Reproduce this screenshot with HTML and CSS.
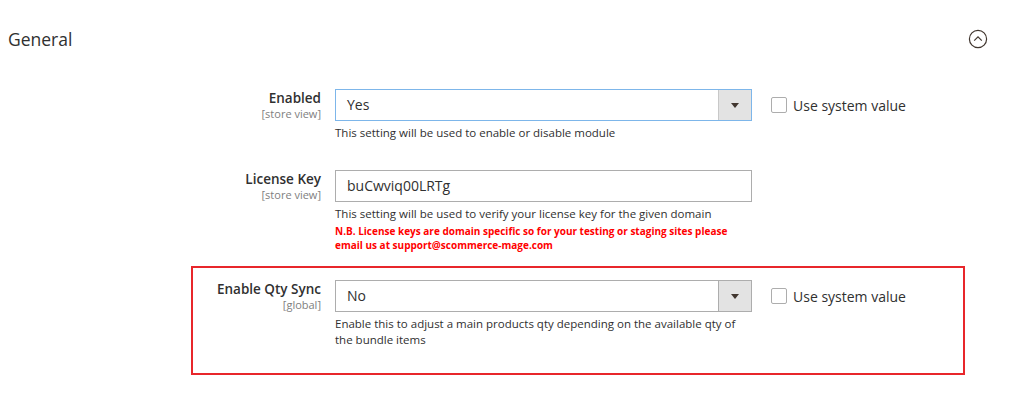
FILE: index.html
```html
<!DOCTYPE html>
<html lang="en">
<head>
  <meta charset="UTF-8" />
  <meta name="viewport" content="width=device-width, initial-scale=1.0"/>
  <title>General Configuration</title>
  <link rel="stylesheet" href="styles.css">
</head>
<body>
  <div class="section-head">
    <span class="section-title">General</span>
    <svg class="collapse-icon" width="20" height="20" viewBox="0 0 20 20">
      <circle cx="10" cy="10" r="8.6" fill="none" stroke="#41362f" stroke-width="1.2"/>
      <path d="M6.2 11.6 L10 7.8 L13.8 11.6" fill="none" stroke="#41362f" stroke-width="1.2"/>
    </svg>
  </div>

  <div class="form">
    <div class="row">
      <div class="label">
        <div class="label-text">Enabled</div>
        <div class="scope">[store view]</div>
      </div>
      <div class="value">
        <div class="select-box focused">
          <span class="select-value">Yes</span>
          <span class="select-btn"><span class="arrow"></span></span>
        </div>
        <div class="note">This setting will be used to enable or disable module</div>
      </div>
      <label class="use-default"><span class="checkbox"></span>Use system value</label>
    </div>

    <div class="row">
      <div class="label">
        <div class="label-text">License Key</div>
        <div class="scope">[store view]</div>
      </div>
      <div class="value">
        <div class="text-input">buCwviq00LRTg</div>
        <div class="note">This setting will be used to verify your license key for the given domain</div>
        <div class="note-warn">N.B. License keys are domain specific so for your testing or staging sites please email us at support@scommerce-mage.com</div>
      </div>
      <div></div>
    </div>

    <div class="row row-highlight">
      <div class="label">
        <div class="label-text">Enable Qty Sync</div>
        <div class="scope">[global]</div>
      </div>
      <div class="value">
        <div class="select-box">
          <span class="select-value">No</span>
          <span class="select-btn"><span class="arrow"></span></span>
        </div>
        <div class="note">Enable this to adjust a main products qty depending on the available qty of the bundle items</div>
      </div>
      <label class="use-default"><span class="checkbox"></span>Use system value</label>
    </div>
  </div>
</body>
</html>
```

FILE: styles.css
```css
body {
  font-family: 'Open Sans', 'Liberation Sans', sans-serif;
  background-color: #ffffff;
  color: #303030;
  margin: 0;
}

.section-head {
  display: flex;
  justify-content: space-between;
  align-items: center;
  padding: 28px 36px 24px 8px;
}

.section-title {
  font-size: 17.5px;
  line-height: 22px;
  color: #303030;
}

.collapse-icon {
  display: block;
}

.form {
  padding-left: 191px;
}

.row {
  display: grid;
  grid-template-columns: 128px 417px 1fr;
  column-gap: 14px;
  width: 770px;
  border: 2px solid transparent;
  padding: 13px 0 12px;
}

.row-highlight {
  border-color: #e8262b;
  padding-top: 12px;
  padding-bottom: 25px;
}

.label {
  text-align: right;
}

.label-text {
  font-size: 13.5px;
  font-weight: 600;
  line-height: 18px;
}

.scope {
  font-size: 11px;
  line-height: 14px;
  color: #808080;
}

.select-box, .text-input {
  display: flex;
  height: 32px;
  box-sizing: border-box;
  border: 1px solid #adadad;
  font-size: 14px;
}

.select-box.focused {
  border-color: #7db6ea;
}

.select-value {
  flex: 1;
  padding-left: 11px;
  line-height: 30px;
}

.select-btn {
  width: 32px;
  background-color: #e3e3e3;
  border-left: 1px solid #adadad;
  display: flex;
  align-items: center;
  justify-content: center;
}

.focused .select-btn {
  border-left-color: #c8c8c8;
}

.arrow {
  width: 0;
  height: 0;
  border-left: 4px solid transparent;
  border-right: 4px solid transparent;
  border-top: 5px solid #41362f;
}

.text-input {
  padding-left: 11px;
  line-height: 30px;
}

.note {
  font-size: 11.5px;
  line-height: 16px;
  margin-top: 4px;
  color: #303030;
}

.note-warn {
  font-size: 10px;
  font-weight: 700;
  line-height: 14px;
  margin-top: 2px;
  color: #ff0000;
}

.use-default {
  display: flex;
  align-items: center;
  gap: 6px;
  height: 32px;
  margin-left: 5px;
  font-size: 14px;
  color: #303030;
}

.checkbox {
  width: 14px;
  height: 14px;
  border: 1px solid #adadad;
  border-radius: 2px;
  background-color: #ffffff;
}
```
